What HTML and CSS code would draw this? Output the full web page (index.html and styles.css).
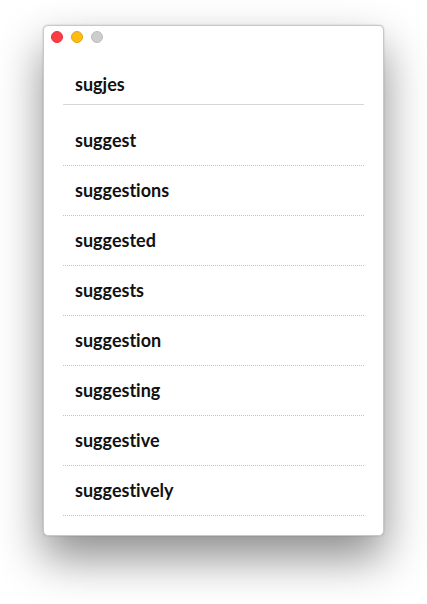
FILE: index.html
```html
<!DOCTYPE html>
<html>
<head>
<meta charset="utf-8">
<link rel="stylesheet" href="styles.css">
</head>
<body>
<div class="window">
  <div class="titlebar">
    <span class="dot red"></span>
    <span class="dot yellow"></span>
    <span class="dot grey"></span>
  </div>
  <div class="content">
    <div class="search">sugjes</div>
    <ul class="list">
      <li>suggest</li>
      <li>suggestions</li>
      <li>suggested</li>
      <li>suggests</li>
      <li>suggestion</li>
      <li>suggesting</li>
      <li>suggestive</li>
      <li>suggestively</li>
    </ul>
  </div>
</div>
</body>
</html>
```
FILE: styles.css
```css
html, body {
  margin: 0;
  padding: 0;
  background: #fff;
}
body {
  padding: 25px 0 68px 43px;
  font-family: "Lato", "DejaVu Sans", sans-serif;
  font-variant-ligatures: none;
}
.window {
  width: 341px;
  height: 511px;
  box-sizing: border-box;
  background: #fff;
  border-radius: 5px;
  border: 1px solid #c8c8c8;
  box-shadow: 0 22px 45px rgba(0,0,0,0.45), 0 0 2px rgba(0,0,0,0.2);
}
.titlebar {
  height: 22px;
  display: flex;
  align-items: center;
  gap: 8px;
  padding: 0 0 0 7px;
}
.dot {
  width: 12px;
  height: 12px;
  border-radius: 50%;
  box-sizing: border-box;
}
.red { background: #fc3d45; border: 1px solid #e0333b; }
.yellow { background: #fdbc13; border: 1px solid #e3a510; }
.grey { background: #cdcdcd; border: 1px solid #bdbdbd; }
.content {
  padding: 0 19px;
}
.search {
  height: 57px;
  box-sizing: border-box;
  border-bottom: 1px solid #d6d6d6;
  padding: 26px 0 0 12px;
  font-size: 18px;
  font-weight: 700;
  color: #111;
  line-height: 20px;
}
.list {
  list-style: none;
  margin: 11px 0 0;
  padding: 0;
}
.list li {
  height: 50px;
  box-sizing: border-box;
  border-bottom: 1px dotted #c4c4c4;
  padding: 0 0 2px 12px;
  display: flex;
  align-items: center;
  font-size: 18px;
  font-weight: 700;
  color: #111;
}
```
